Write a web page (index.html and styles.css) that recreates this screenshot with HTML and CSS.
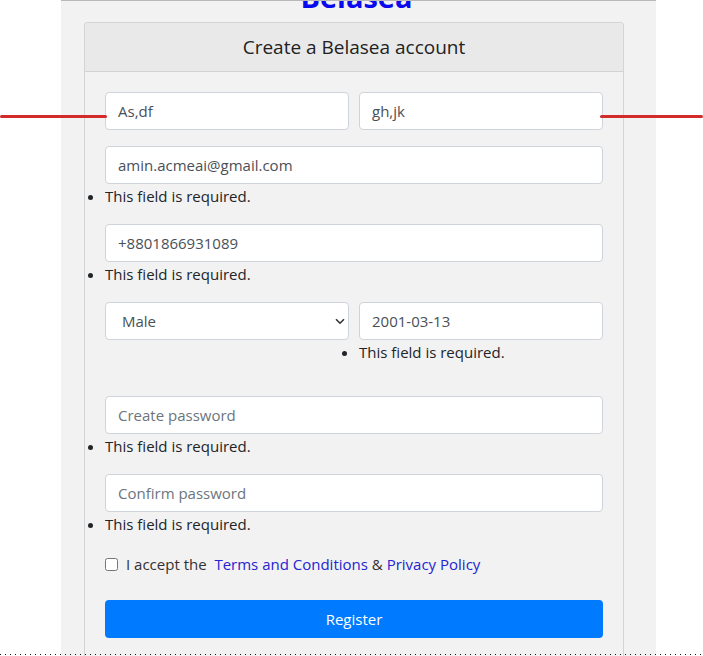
FILE: index.html
```html
<!DOCTYPE html>
<html lang="en">
<head>
<meta charset="utf-8">
<title>Create a Belasea account</title>
<link rel="stylesheet" href="styles.css">
</head>
<body>
<div class="page">
  <h1 class="brand">Belasea</h1>
  <div class="card">
    <div class="card-header">Create a Belasea account</div>
    <form class="card-body">
      <div class="row group">
        <div class="col"><input class="field" type="text" value="As,df"></div>
        <div class="col"><input class="field" type="text" value="gh,jk"></div>
      </div>
      <div class="group">
        <input class="field" type="text" value="amin.acmeai@gmail.com">
        <ul class="errors"><li>This field is required.</li></ul>
      </div>
      <div class="group">
        <input class="field" type="text" value="+8801866931089">
        <ul class="errors"><li>This field is required.</li></ul>
      </div>
      <div class="row group group-wide">
        <div class="col">
          <div class="select-wrap">
            <select class="field select"><option>Male</option></select>
            <svg class="chev" width="10" height="7" viewBox="0 0 10 7"><path d="M1 1.2l4 4 4-4" fill="none" stroke="#333" stroke-width="1.6"/></svg>
          </div>
        </div>
        <div class="col">
          <input class="field" type="text" value="2001-03-13">
          <ul class="errors"><li>This field is required.</li></ul>
        </div>
      </div>
      <div class="group">
        <input class="field" type="password" placeholder="Create password">
        <ul class="errors"><li>This field is required.</li></ul>
      </div>
      <div class="group">
        <input class="field" type="password" placeholder="Confirm password">
        <ul class="errors"><li>This field is required.</li></ul>
      </div>
      <label class="check">
        <input type="checkbox" class="box">
        <span>I accept the&nbsp; <a href="#">Terms and Conditions</a> &amp; <a href="#">Privacy Policy</a></span>
      </label>
      <button type="button" class="btn">Register</button>
    </form>
  </div>
</div>
<div class="marker marker-left"></div>
<div class="marker marker-right"></div>
<div class="dotted"></div>
</body>
</html>
```
FILE: styles.css
```css
* { box-sizing: border-box; }
html, body { margin: 0; padding: 0; }
body {
  background: #fff;
  font-family: "Open Sans", "Noto Sans", sans-serif;
  font-size: 15px;
  color: #212529;
  height: 656px;
  overflow: hidden;
  position: relative;
}
.page {
  margin-left: 61px;
  width: 595px;
  height: 656px;
  background: #f2f2f2;
  border-top: 1px solid #b9b9b9;
  overflow: hidden;
}
.brand {
  margin: -21px 0 8px;
  font-size: 29px;
  line-height: 34px;
  font-weight: 700;
  color: #0a0aef;
  text-align: center;
  padding-right: 4px;
}
.card {
  margin-left: 23px;
  width: 540px;
  border: 1px solid #d4d4d4;
  border-bottom: none;
  border-radius: 4px 4px 0 0;
  background: #f2f2f2;
  min-height: 700px;
}
.card-header {
  height: 49px;
  background: #e9e9e9;
  border-bottom: 1px solid #d2d2d2;
  border-radius: 4px 4px 0 0;
  display: flex;
  align-items: center;
  justify-content: center;
  font-size: 19px;
  font-weight: 500;
  color: #222;
}
.card-body {
  padding: 20px 20px 0;
  margin: 0;
}
.group { margin-bottom: 16px; }
.group-wide { margin-bottom: 32px; }
.row {
  display: flex;
  gap: 10px;
  align-items: flex-start;
}
.col { flex: 1 1 0; min-width: 0; }
.field {
  display: block;
  width: 100%;
  height: 38px;
  border: 1px solid #ced4da;
  border-radius: 4px;
  background: #fff;
  padding: 0 12px;
  font-family: inherit;
  font-size: 15px;
  color: #495057;
  outline: none;
}
.field::placeholder { color: #6c757d; opacity: 1; }
.select-wrap { position: relative; }
.select {
  appearance: none;
  -webkit-appearance: none;
  padding-left: 16px;
}
.chev {
  position: absolute;
  right: 4px;
  top: 16px;
  pointer-events: none;
}
.errors {
  margin: 0;
  padding-left: 0;
  list-style: disc outside;
  line-height: 24px;
  color: #212529;
}
.errors li { margin: 0; }
.check {
  display: flex;
  align-items: center;
  height: 24px;
  margin-bottom: 24px;
  color: #333;
  line-height: 24px;
}
.box {
  width: 13px;
  height: 13px;
  margin: 0 8px 0 0;
}
.check a { color: #2424d0; text-decoration: none; }
.btn {
  display: block;
  width: 100%;
  height: 38px;
  border: none;
  border-radius: 4px;
  background: #007bff;
  color: #fff;
  font-family: inherit;
  font-size: 15px;
  cursor: pointer;
}
.marker {
  position: absolute;
  top: 115px;
  height: 3px;
  background: #d32a2a;
  border-radius: 2px;
}
.marker-left { left: 0; width: 107px; }
.marker-right { left: 600px; width: 103px; }
.dotted {
  position: absolute;
  left: 0;
  right: 0;
  top: 654px;
  height: 1px;
  background: repeating-linear-gradient(90deg, #111 0 1px, transparent 1px 5px);
}
```
